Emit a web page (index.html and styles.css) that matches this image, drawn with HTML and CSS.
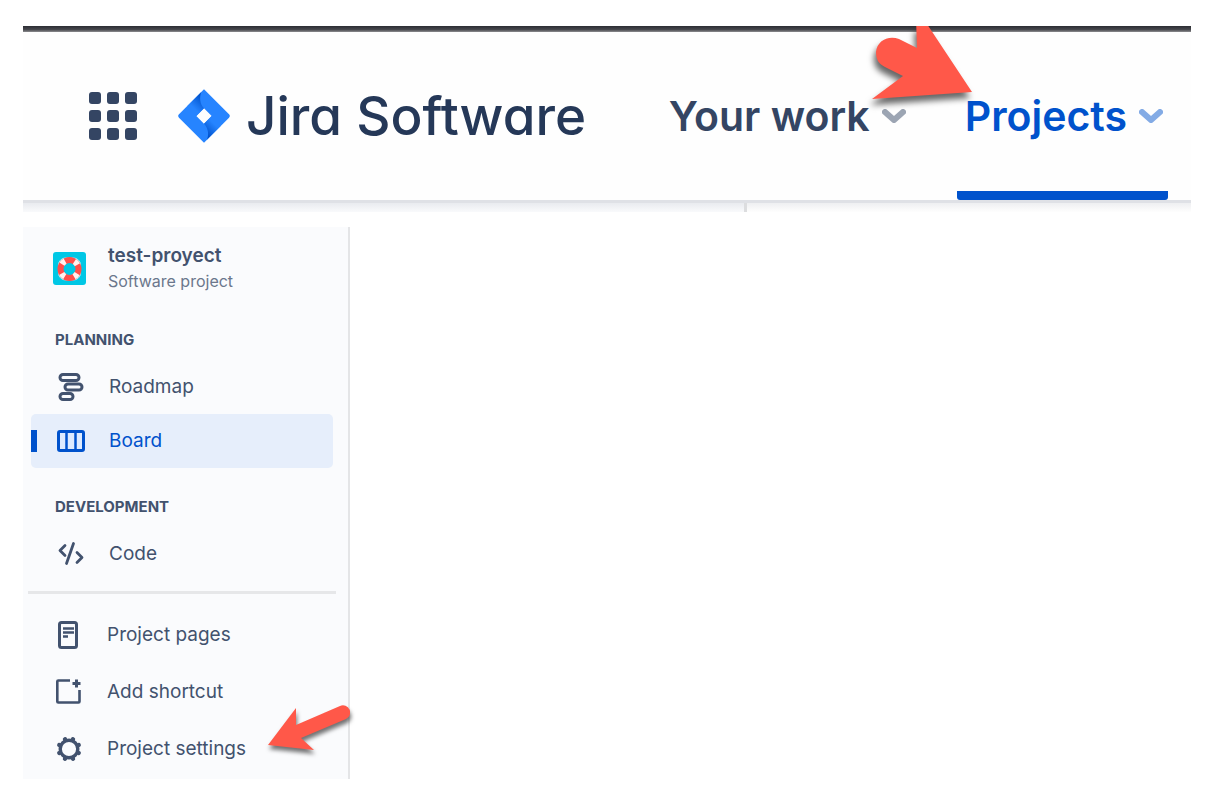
FILE: index.html
```html
<!DOCTYPE html>
<html lang="en">
<head>
<meta charset="utf-8">
<title>Jira Software</title>
<link rel="stylesheet" href="styles.css">
</head>
<body>
<header class="topbar">
  <div class="topbar-edge"></div>
  <div class="topbar-row">
    <button class="switcher" aria-label="Switch to">
      <svg width="50" height="50" viewBox="0 0 50 50" fill="#344563">
        <rect x="1" y="1" width="12" height="12" rx="3"/><rect x="19" y="1" width="12" height="12" rx="3"/><rect x="37" y="1" width="12" height="12" rx="3"/>
        <rect x="1" y="19" width="12" height="12" rx="3"/><rect x="19" y="19" width="12" height="12" rx="3"/><rect x="37" y="19" width="12" height="12" rx="3"/>
        <rect x="1" y="37" width="12" height="12" rx="3"/><rect x="19" y="37" width="12" height="12" rx="3"/><rect x="37" y="37" width="12" height="12" rx="3"/>
      </svg>
    </button>
    <a class="brand" href="#">
      <svg width="52" height="54" viewBox="0 0 156 162" aria-hidden="true">
        <defs>
          <linearGradient id="foldTop" x1="72" y1="24" x2="44" y2="54" gradientUnits="userSpaceOnUse"><stop offset="0" stop-color="#0052cc"/><stop offset="1" stop-color="#2684ff"/></linearGradient>
          <linearGradient id="foldBottom" x1="84" y1="136" x2="112" y2="108" gradientUnits="userSpaceOnUse"><stop offset="0" stop-color="#0052cc"/><stop offset="1" stop-color="#2684ff"/></linearGradient>
        </defs>
        <path fill="#2684ff" fill-rule="evenodd" d="M78 1 153 76Q158 81 153 86L78 161 3 86Q-2 81 3 76ZM78 58 55 81 78 104 101 81Z"/>
        <path fill="url(#foldTop)" d="M70 9C64 24 65 44 78 58L55 81 28 51Z"/>
        <path fill="url(#foldBottom)" d="M86 153C94 138 91 118 78 104L101 81 128 111Z"/>
      </svg>
      <span class="brand-name">Jira Software</span>
    </a>
    <nav class="topnav" aria-label="Main">
      <button class="tab">Your work
        <svg class="chevron" width="24" height="16" viewBox="0 0 24 16"><path d="M3 4 12 12 21 4"/></svg>
      </button>
      <button class="tab tab-active">Projects
        <svg class="chevron" width="24" height="16" viewBox="0 0 24 16"><path d="M3 4 12 12 21 4"/></svg>
      </button>
    </nav>
  </div>
  <div class="page-strip"><div class="strip-side"></div><div class="strip-main"></div></div>
  <svg class="pointer pointer-top" width="112" height="92" viewBox="865 26 112 92" aria-hidden="true"><path d="M972 92 923 18H916L917 48 899 39C888 35 877 41 876 52C876 60 879 64 885 67L903 76 872 99Z"/></svg>
</header>

<aside class="sidebar">
  <div class="project">
    <svg width="33" height="33" viewBox="0 0 33 33" aria-hidden="true">
      <rect width="33" height="33" rx="3" fill="#00c7e5"/>
      <rect x="5.500" y="6" width="22" height="22" rx="7" fill="none" stroke="#b5edf5"/>
      <circle cx="16.500" cy="17" r="9" fill="none" stroke="#ff4f4b" stroke-width="6"/>
      <circle cx="16.500" cy="17" r="9" fill="none" stroke="#fff2f0" stroke-width="6" stroke-dasharray="4.4 9.74" stroke-dashoffset="-4.9"/>
    </svg>
    <div>
      <div class="project-name">test-proyect</div>
      <div class="project-type">Software project</div>
    </div>
  </div>

  <h2 class="group">Planning</h2>
  <a class="item" href="#">
    <svg width="28" height="28" viewBox="0 0 28 28"><g fill="none" stroke="currentColor" stroke-width="3"><rect x="3" y="1.500" width="19" height="6" rx="3"/><rect x="8" y="11" width="17" height="6" rx="3"/><rect x="3" y="20.500" width="13" height="6" rx="3"/></g></svg>
    Roadmap
  </a>
  <a class="item item-active" href="#" aria-current="page">
    <svg width="28" height="28" viewBox="0 0 28 28"><rect x="1.500" y="4.500" width="25" height="19" rx="1.500" fill="#deebff" stroke="currentColor" stroke-width="3"/><path d="M9.500 4V24M18.500 4V24" stroke="currentColor" stroke-width="2.500"/></svg>
    Board
  </a>

  <h2 class="group">Development</h2>
  <a class="item" href="#">
    <svg width="28" height="28" viewBox="0 0 28 28" fill="none" stroke="currentColor" stroke-width="2.800" stroke-linecap="round" stroke-linejoin="round"><path d="M8 5.500 3 10.500 8 15.500M16.500 3.500 9.500 23.500M20 12.500 25 17.500 20 22.500"/></svg>
    Code
  </a>

  <hr class="divider">
  <div class="links">
    <a class="item item-tall" href="#">
      <svg width="28" height="28" viewBox="0 0 28 28" fill="none" stroke="currentColor"><rect x="4.500" y="1.500" width="17" height="25" rx="2" stroke-width="3"/><path d="M8 7.500H19M8 11.500H19M8 15.500H13" stroke-width="2.400"/></svg>
      Project pages
    </a>
    <a class="item item-tall" href="#">
      <svg width="28" height="28" viewBox="0 0 28 28" fill="none" stroke="currentColor" stroke-width="2.600"><path d="M15 2.500H3.300Q2.300 2.500 2.300 3.500V23.500Q2.300 24.500 3.300 24.500H23.500Q24.500 24.500 24.500 23.500V12"/><path d="M21.500 1.500V9.500M17.500 5.500H25.500" stroke-width="3"/></svg>
      Add shortcut
    </a>
    <a class="item item-tall" href="#">
      <svg width="28" height="28" viewBox="0 0 28 28" fill="none" stroke="currentColor"><circle cx="14" cy="14" r="8.800" stroke-width="3.400"/><g stroke-width="4.400" stroke-linecap="round"><path d="M10.200 4.800 10 4.300M17.800 4.800 18 4.300M23.200 10.200 23.700 10M23.200 17.800 23.700 18M17.800 23.200 18 23.700M10.200 23.200 10 23.700M4.800 17.800 4.300 18M4.800 10.200 4.300 10"/></g></svg>
      Project settings
    </a>
  </div>
  <svg class="pointer pointer-bottom" width="90" height="62" viewBox="260 699 90 62" aria-hidden="true"><path d="M268 745 296 708V725L340 706A7 7 0 0 1 346 719L301 738 314 750Z"/></svg>
</aside>
</body>
</html>
```
FILE: styles.css
```css
* { box-sizing: border-box; }

body {
  margin: 0;
  padding: 26px 23px 7px;
  background: #fff;
  color: #42526e;
  font-family: Inter, "Liberation Sans", sans-serif;
}

button { padding: 0; border: 0; background: none; font: inherit; color: inherit; }
a { color: inherit; text-decoration: none; }
svg { flex: none; display: block; }

.topbar { position: relative; overflow: hidden; margin-bottom: 15px; }
.topbar-edge { height: 6px; background: linear-gradient(#2b2d33, #47484d 60%, #8d8d90); }
.topbar-row { display: flex; align-items: center; height: 168px; padding-left: 65px; background: #fefefe; }
.brand { display: flex; align-items: center; gap: 16px; margin-left: 40px; }
.brand-name {
  color: #253858;
  font-size: 53px;
  font-weight: 450;
  line-height: 64px;
  font-feature-settings: "cv11";
  white-space: nowrap;
}

.topnav { display: flex; align-self: stretch; gap: 46px; margin-left: auto; padding-right: 23px; }
.tab {
  display: flex;
  align-items: center;
  gap: 12px;
  padding: 0 5px 0 8px;
  color: #344563;
  font-size: 41px;
  font-weight: 600;
  white-space: nowrap;
}
.tab-active { border-radius: 3px; color: #0052cc; background: linear-gradient(#0052cc, #0052cc) bottom / 100% 9px no-repeat; }
.chevron { fill: none; stroke: currentColor; stroke-width: 6px; stroke-linecap: round; stroke-linejoin: round; opacity: .48; }

.page-strip { display: flex; height: 12px; border-top: 3px solid #dfe1e6; }
.strip-side { width: 62%; border-right: 3px solid #dcdddf; background: linear-gradient(#e9ebef, #f9fafc); }
.strip-main { flex: 1; background: linear-gradient(#eeeff1, #fefefe); }

.pointer { position: absolute; fill: #ff5849; pointer-events: none; }
.pointer-top { top: 0; right: 214px; filter: drop-shadow(-2px 6px 3px rgba(0, 0, 0, .6)); }
.pointer-bottom { right: -2px; bottom: 18px; filter: drop-shadow(1px 4px 2px rgba(0, 0, 0, .55)); }

.sidebar {
  position: relative;
  width: 327px;
  padding: 16px 15px 2px 8px;
  border-right: 2px solid #e4e5e7;
  background: #fafbfd;
}
.project { display: flex; align-items: center; gap: 22px; padding-left: 22px; }
.project-name { font-size: 19px; line-height: 26px; font-weight: 600; }
.project-type { color: #6b778c; font-size: 16px; line-height: 24px; }
.group { margin: 0; padding: 37px 0 10px 24px; font-size: 15px; line-height: 20px; font-weight: 700; text-transform: uppercase; }
.group ~ .group { padding-top: 29px; }
.item { display: flex; align-items: center; gap: 24px; height: 54px; padding-left: 26px; font-size: 19px; line-height: 24px; }
.item-active {
  border-radius: 5px;
  background: linear-gradient(#0052cc, #0052cc) left / 6px 22px no-repeat, #e6eefb;
  color: #0052cc;
}
.divider { height: 3px; margin: 10px -3px 12px; border: 0; background: #e6e7e9; }
.item-tall { height: 57px; padding-left: 24px; }
```
